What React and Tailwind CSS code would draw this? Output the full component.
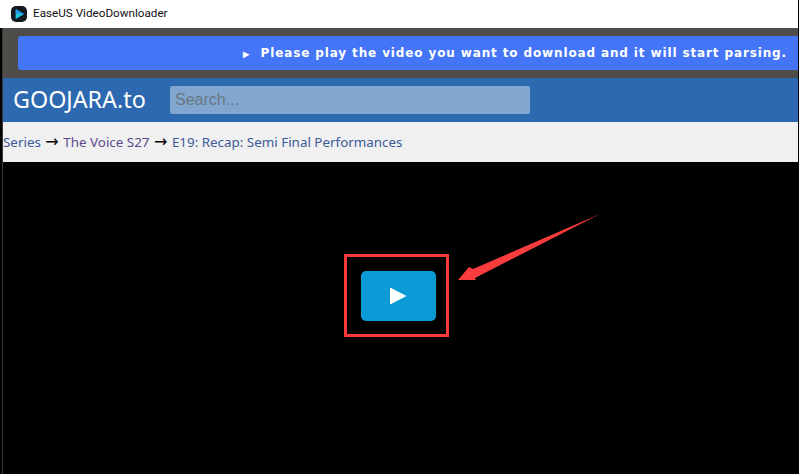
export default function App() {
  return (
    <div className="relative w-[799px] h-[474px] overflow-hidden bg-black flex flex-col border-r border-black font-['Noto_Sans',sans-serif]">
      <div className="h-[28px] bg-white flex items-center pl-[11px] gap-[6px] shrink-0">
        <svg width="16" height="16" viewBox="0 0 16 16">
          <rect width="16" height="16" rx="5" fill="#15181f" />
          <path d="M5 3.5 L12.5 8 L5 12.5 Z" fill="#1f9be8" stroke="#1f9be8" strokeWidth="1" strokeLinejoin="round" />
          <path d="M5 8 L12.5 8 L5 12.5 Z" fill="#22c7d8" />
        </svg>
        <span className="text-[11.7px] text-[#111] leading-none font-['Roboto',sans-serif]">EaseUS VideoDownloader</span>
      </div>
      <div className="flex-1 flex flex-col ml-[2px] border-l border-[#3a3a3a] min-h-0">
        <div className="h-[50px] bg-[#4f4d4a] pl-[15px] py-[8px] shrink-0">
          <div className="h-[34px] bg-[#4475f6] rounded-l-[3px] flex items-center justify-end pr-[11px] gap-[9px] text-white">
            <span className="text-[11px] leading-none">►</span>
            <span className="text-[12px] font-bold tracking-[0.87px] font-['DejaVu_Sans',sans-serif] whitespace-nowrap">Please play the video you want to download and it will start parsing.</span>
          </div>
        </div>
        <div className="h-[44px] bg-[#2d69b0] flex items-center pl-[10px] shrink-0">
          <span className="text-[23.3px] text-white leading-none w-[157px] whitespace-nowrap">GOOJARA.to</span>
          <div className="w-[360px] h-[28px] bg-[#81a6cf] rounded-[2px] flex items-center pl-[5px] text-[16px] text-[#6b7684] font-['Liberation_Sans',sans-serif]">Search...</div>
        </div>
        <div className="h-[40px] bg-[#f0f0f0] flex items-center text-[13.4px] text-[#3b5a9a] whitespace-nowrap shrink-0">
          <span>Series</span>
          <span className="text-black text-[16px] leading-none mx-[4.5px] font-['DejaVu_Sans',sans-serif]">→</span>
          <span className="text-[#5d4a8e]">The Voice S27</span>
          <span className="text-black text-[16px] leading-none mx-[4.5px] font-['DejaVu_Sans',sans-serif]">→</span>
          <span>E19: Recap: Semi Final Performances</span>
        </div>
        <div className="flex-1 bg-black flex items-start justify-center pt-[109px]">
          <div className="w-[75px] h-[50px] bg-[#0a9ad6] rounded-[5px] flex items-center justify-center relative left-[-2px] pr-[2px]">
            <svg width="18" height="18" viewBox="0 0 18 18"><path d="M1 0.5 L17.5 9 L1 17.5 Z" fill="#fff" /></svg>
          </div>
        </div>
      </div>
      <div className="absolute left-[344px] top-[254px] w-[105px] h-[83px] border-[3px] border-[#fb3a3a]" />
      <svg className="absolute left-[455px] top-[210px]" width="150" height="75" viewBox="0 0 150 75">
        <path d="M145 4 L18 59 L14 57 L3 70 L21 70 L20 68 Z" fill="#fb3c3c" />
      </svg>
    </div>
  );
}
